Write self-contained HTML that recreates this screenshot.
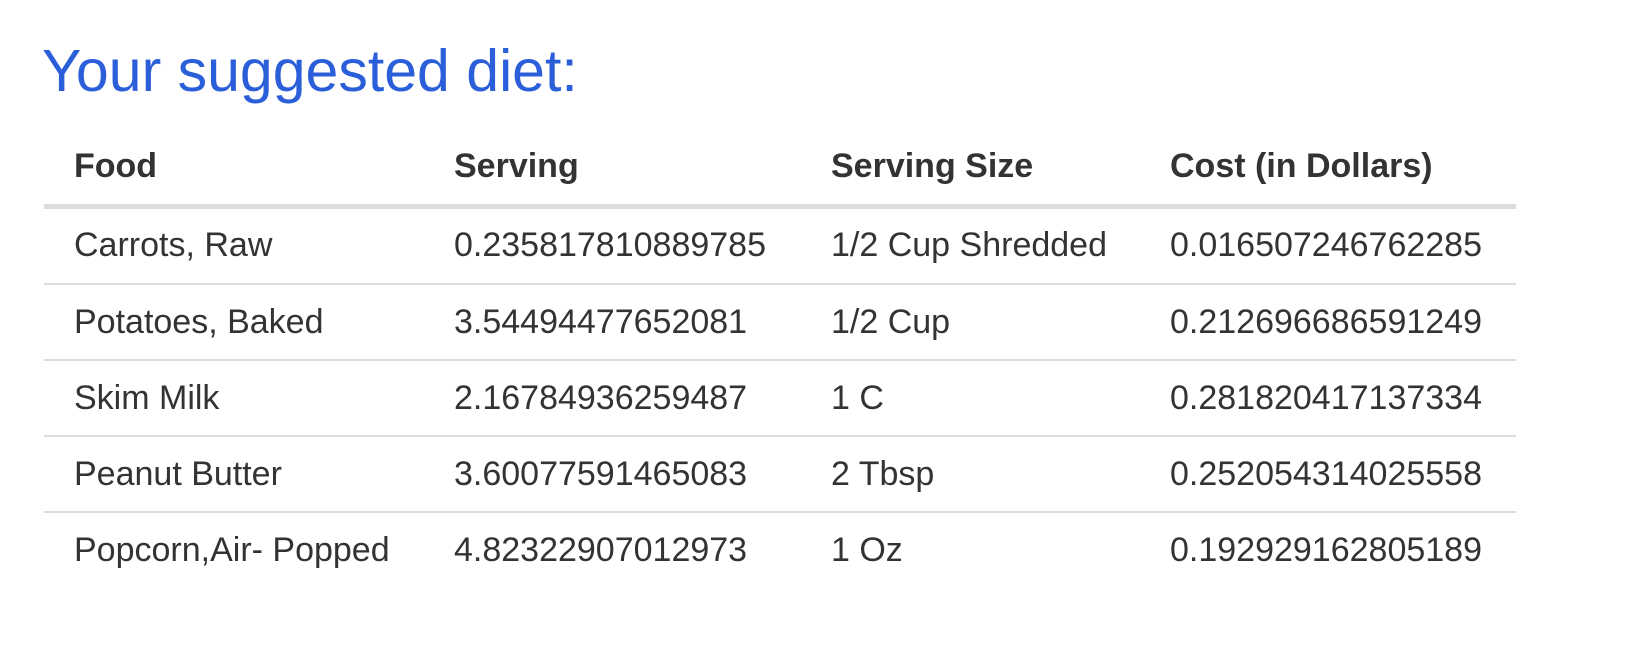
<!DOCTYPE html>
<html><head><meta charset="utf-8"><style>
html,body{margin:0;padding:0;background:#fff;width:1626px;height:666px;overflow:hidden;font-family:"Liberation Sans",Arial,sans-serif;}
.t{position:absolute;left:42px;top:42px;font-size:59px;line-height:59px;color:#2b5fd9;white-space:nowrap;}
.c{position:absolute;font-size:34px;line-height:34px;color:#333;white-space:nowrap;}
.b{font-weight:bold;}
.l{position:absolute;left:44px;width:1472px;background:#dddddd;}
</style></head><body>
<div class="t">Your suggested diet:</div>

<div class="c b" style="left:74px;top:149px">Food</div>
<div class="c b" style="left:454px;top:149px">Serving</div>
<div class="c b" style="left:831px;top:149px">Serving Size</div>
<div class="c b" style="left:1170px;top:149px">Cost (in Dollars)</div>
<div class="l" style="top:204px;height:5px"></div>

<div class="c" style="left:74px;top:228px">Carrots, Raw</div>
<div class="c" style="left:454px;top:228px">0.235817810889785</div>
<div class="c" style="left:831px;top:228px">1/2 Cup Shredded</div>
<div class="c" style="left:1170px;top:228px">0.016507246762285</div>
<div class="l" style="top:283px;height:2px"></div>

<div class="c" style="left:74px;top:305px">Potatoes, Baked</div>
<div class="c" style="left:454px;top:305px">3.54494477652081</div>
<div class="c" style="left:831px;top:305px">1/2 Cup</div>
<div class="c" style="left:1170px;top:305px">0.212696686591249</div>
<div class="l" style="top:359px;height:2px"></div>

<div class="c" style="left:74px;top:381px">Skim Milk</div>
<div class="c" style="left:454px;top:381px">2.16784936259487</div>
<div class="c" style="left:831px;top:381px">1 C</div>
<div class="c" style="left:1170px;top:381px">0.281820417137334</div>
<div class="l" style="top:435px;height:2px"></div>

<div class="c" style="left:74px;top:457px">Peanut Butter</div>
<div class="c" style="left:454px;top:457px">3.60077591465083</div>
<div class="c" style="left:831px;top:457px">2 Tbsp</div>
<div class="c" style="left:1170px;top:457px">0.252054314025558</div>
<div class="l" style="top:511px;height:2px"></div>

<div class="c" style="left:74px;top:533px">Popcorn,Air- Popped</div>
<div class="c" style="left:454px;top:533px">4.82322907012973</div>
<div class="c" style="left:831px;top:533px">1 Oz</div>
<div class="c" style="left:1170px;top:533px">0.192929162805189</div>
</body></html>
